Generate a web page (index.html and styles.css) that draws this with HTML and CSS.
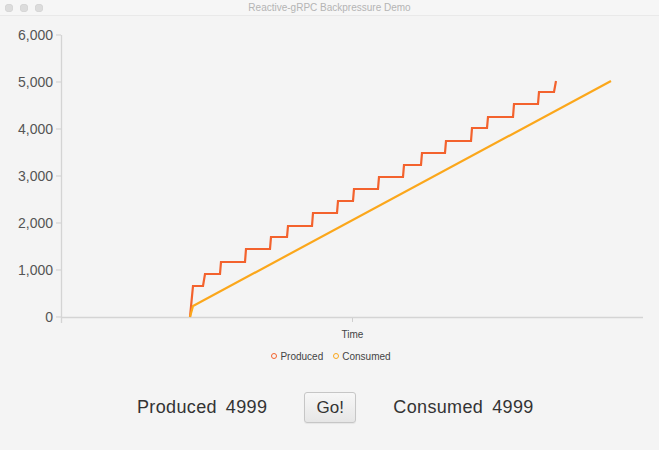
FILE: index.html
```html
<!DOCTYPE html>
<html lang="en">
<head>
<meta charset="utf-8">
<title>Reactive-gRPC Backpressure Demo</title>
<link rel="stylesheet" href="styles.css">
</head>
<body>
<div class="window">
  <header class="titlebar">
    <div class="lights">
      <span class="light"></span>
      <span class="light"></span>
      <span class="light"></span>
    </div>
    <div class="title">Reactive-gRPC Backpressure Demo</div>
    <div class="spacer"></div>
  </header>

  <section class="chart">
    <svg class="plot" width="659" height="330" viewBox="0 16 659 330">
      <g class="axis">
        <line x1="61.5" y1="35" x2="61.5" y2="323"></line>
        <line x1="62" y1="317.5" x2="643" y2="317.5"></line>
      </g>
      <g class="ticks">
        <line x1="56" y1="35" x2="61" y2="35"></line>
        <line x1="56" y1="82" x2="61" y2="82"></line>
        <line x1="56" y1="129" x2="61" y2="129"></line>
        <line x1="56" y1="176" x2="61" y2="176"></line>
        <line x1="56" y1="223" x2="61" y2="223"></line>
        <line x1="56" y1="270" x2="61" y2="270"></line>
        <line x1="56" y1="317" x2="61" y2="317"></line>
        <line x1="352.5" y1="318" x2="352.5" y2="322"></line>
      </g>
      <g class="ylabels">
        <text x="53" y="35" dy="0.36em">6,000</text>
        <text x="53" y="82" dy="0.36em">5,000</text>
        <text x="53" y="129" dy="0.36em">4,000</text>
        <text x="53" y="176" dy="0.36em">3,000</text>
        <text x="53" y="223" dy="0.36em">2,000</text>
        <text x="53" y="270" dy="0.36em">1,000</text>
        <text x="53" y="317" dy="0.36em">0</text>
      </g>
      <text class="xlabel" x="352.5" y="334" dy="0.36em">Time</text>
      <polyline class="series produced" points="190,317 193,286 203,286 205,274 220,274 221,262 245,262 246,249 270,249 271,237 287,237 288,226 312,226 313,213 337,213 338,201 353,201 354,189 378,189 379,177 403,177 404,165 421,165 422,153 445,153 446,141 471,141 472,128 487,128 488,117 513,117 514,104 538,104 539,92 554,92 556,81"></polyline>
      <polyline class="series consumed" points="190,317 193,306 611,81"></polyline>
    </svg>

    <div class="legend">
      <span class="legend-item"><span class="ring ring-produced"></span>Produced</span>
      <span class="legend-item"><span class="ring ring-consumed"></span>Consumed</span>
    </div>
  </section>

  <div class="controls">
    <div class="stat"><span>Produced</span><span>4999</span></div>
    <button class="go" type="button">Go!</button>
    <div class="stat"><span>Consumed</span><span>4999</span></div>
  </div>
</div>
</body>
</html>
```

FILE: styles.css
```css
html, body {
  margin: 0;
  padding: 0;
}

body {
  background: #f4f4f4;
  font-family: "Liberation Sans", Arial, sans-serif;
  color: #333;
  width: 659px;
  height: 450px;
  overflow: hidden;
}

.window {
  display: flex;
  flex-direction: column;
}

.titlebar {
  height: 15px;
  display: grid;
  grid-template-columns: 1fr auto 1fr;
  align-items: center;
  background: #f6f6f6;
  border-bottom: 1px solid #e9e9e9;
}

.lights {
  display: flex;
  gap: 7px;
  padding-left: 5px;
}

.light {
  width: 8px;
  height: 8px;
  border-radius: 50%;
  background: #dcdcdc;
  box-shadow: inset 0 0 0 0.5px #d0d0d0;
}

.title {
  font-size: 10px;
  color: #b4b4b4;
  line-height: 15px;
}

.chart {
  display: flex;
  flex-direction: column;
}

.plot {
  display: block;
}

.axis line {
  stroke: #d4d4d4;
  stroke-width: 1.3;
}

.ticks line {
  stroke: #cfcfcf;
  stroke-width: 1;
}

.ylabels text {
  font-family: "Liberation Sans", Arial, sans-serif;
  font-size: 14px;
  fill: #555;
  text-anchor: end;
}

.xlabel {
  font-family: "Liberation Sans", Arial, sans-serif;
  font-size: 10px;
  fill: #444;
  text-anchor: middle;
}

.series {
  fill: none;
  stroke-width: 2.2;
  stroke-linejoin: miter;
}

.produced {
  stroke: #f3622d;
}

.consumed {
  stroke: #fba71b;
}

.legend {
  height: 20px;
  display: flex;
  justify-content: center;
  align-items: center;
  gap: 10px;
  font-size: 10px;
  color: #444;
  padding-left: 3px;
}

.legend-item {
  display: flex;
  align-items: center;
  gap: 3px;
}

.ring {
  width: 4px;
  height: 4px;
  border-radius: 50%;
  border: 1.5px solid;
}

.ring-produced {
  border-color: #f3622d;
}

.ring-consumed {
  border-color: #fba71b;
}

.controls {
  margin-top: 26px;
  height: 31px;
  display: flex;
  align-items: center;
  gap: 37px;
  padding-left: 137px;
  font-size: 18px;
  letter-spacing: 0.35px;
  color: #333;
}

.stat {
  display: flex;
  gap: 9px;
}

.go {
  width: 52px;
  height: 31px;
  padding: 0;
  font-family: "Liberation Sans", Arial, sans-serif;
  font-size: 17px;
  letter-spacing: 0;
  color: #333;
  background: linear-gradient(#f7f7f7, #e6e6e6);
  border: 1px solid #c6c6c6;
  border-radius: 3px;
  box-shadow: 0 1px 1px rgba(0, 0, 0, 0.06);
}
```
